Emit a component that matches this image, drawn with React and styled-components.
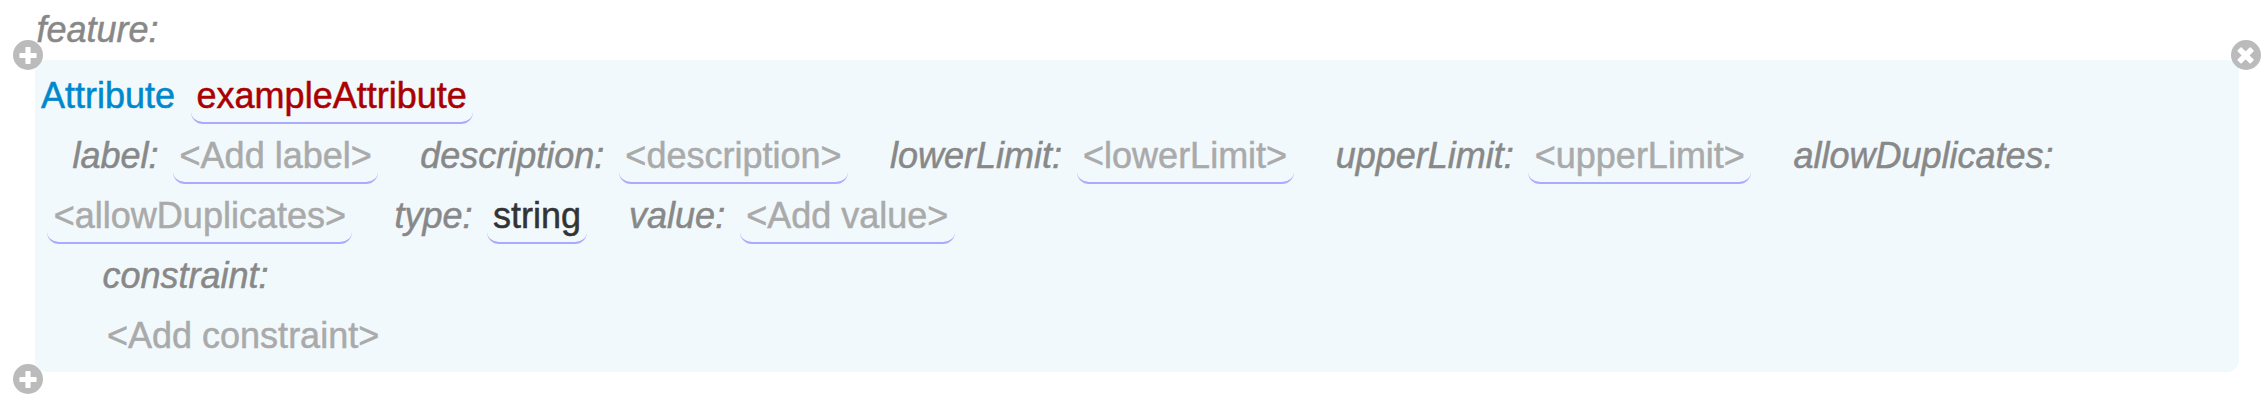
import React from "react";
import styled, { createGlobalStyle } from "styled-components";

const GlobalStyle = createGlobalStyle`
  body {
    margin: 0;
    background: #fff;
  }
`;

const Editor = styled.main`
  box-sizing: border-box;
  width: 2266px;
  height: 411px;
  padding: 0 27px 0 35px;
  font-family: "Liberation Sans", Helvetica, Arial, sans-serif;
  font-size: 36px;
  line-height: 60px;
  color: #333;
  white-space: nowrap;
  -webkit-text-stroke: 0.5px currentColor;
`;

const Panel = styled.section`
  position: relative;
  padding: 6px;
  border-radius: 12px;
  background: #f1f9fd;
`;

const Row = styled.div`
  display: flex;
  height: 60px;
  padding-left: ${(p) => p.$indent || 0}px;
`;

const Field = styled.div`
  display: flex;
  margin-right: 42px;
`;

const Label = styled.span`
  font-style: italic;
  color: #888;
  margin-right: ${(p) => (p.$alone ? 0 : 14.5)}px;
`;

const Keyword = styled.span`
  color: #08c;
  margin-right: 15.5px;
`;

const tones = { name: "#a00", value: "#333", placeholder: "#aaa" };

const Cell = styled.span`
  box-sizing: border-box;
  height: 58px;
  padding: 0 ${(p) => (p.$tone ? 6 : 6.5)}px;
  border-bottom: 2px solid ${(p) => (p.$plain ? "transparent" : "#aaf")};
  border-radius: 12px;
  color: ${(p) => tones[p.$tone || "placeholder"]};
`;

const corners = {
  topLeft: "left: -22px; top: -20px;",
  bottomLeft: "left: -22px; bottom: -22px;",
  topRight: "right: -22px; top: -20px;",
};

const RoundButton = styled.button`
  position: absolute;
  ${(p) => corners[p.$corner]}
  width: 30px;
  height: 30px;
  padding: 0;
  border: 0;
  border-radius: 50%;
  background: #bbb;

  svg {
    display: block;
    transform: ${(p) => (p.$turned ? "rotate(45deg) scale(1.07)" : "none")};
  }
`;

function Action({ corner, label, turned }) {
  return (
    <RoundButton type="button" aria-label={label} $corner={corner} $turned={turned}>
      <svg width="30" height="30" viewBox="0 0 30 30" fill="#fff">
        <rect x="12.4" y="6.9" width="5.2" height="17.2" rx="0.8" />
        <rect x="6.4" y="12.9" width="17.2" height="5.2" rx="0.8" />
      </svg>
    </RoundButton>
  );
}

function Property({ name, children, tone }) {
  return (
    <Field>
      <Label>{name}:</Label>
      <Cell $tone={tone}>{children}</Cell>
    </Field>
  );
}

export default function App() {
  return (
    <>
      <GlobalStyle />
      <Editor>
        <Row $indent={1.5}>
          <Label $alone>feature:</Label>
        </Row>
        <Panel>
          <Row>
            <Keyword>Attribute</Keyword>
            <Cell $tone="name">exampleAttribute</Cell>
          </Row>
          <Row $indent={31.5}>
            <Property name="label">{"<Add label>"}</Property>
            <Property name="description">{"<description>"}</Property>
            <Property name="lowerLimit">{"<lowerLimit>"}</Property>
            <Property name="upperLimit">{"<upperLimit>"}</Property>
            <Label $alone>allowDuplicates:</Label>
          </Row>
          <Row $indent={6.3}>
            <Field>
              <Cell>{"<allowDuplicates>"}</Cell>
            </Field>
            <Property name="type" tone="value">string</Property>
            <Property name="value">{"<Add value>"}</Property>
          </Row>
          <Row $indent={61.5}>
            <Label $alone>constraint:</Label>
          </Row>
          <Row $indent={59.5}>
            <Cell $plain>{"<Add constraint>"}</Cell>
          </Row>
          <Action corner="topLeft" label="Add before" />
          <Action corner="bottomLeft" label="Add after" />
          <Action corner="topRight" label="Delete" turned />
        </Panel>
      </Editor>
    </>
  );
}
